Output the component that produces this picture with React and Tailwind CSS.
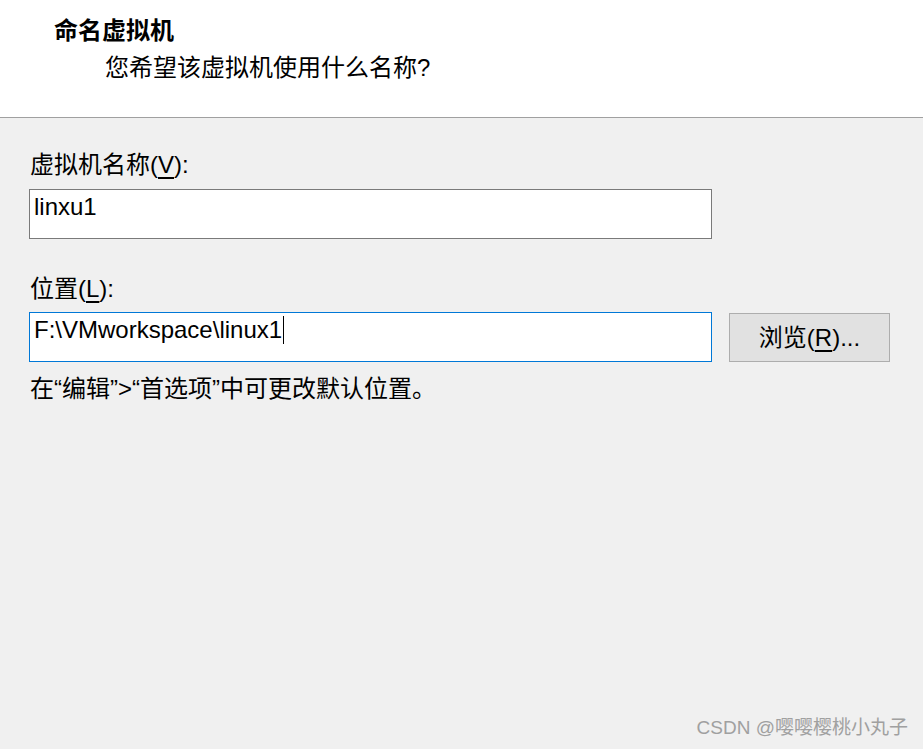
export default function App() {
  const font = "font-['Liberation_Sans','Noto_Sans_CJK_SC',sans-serif]";

  return (
    <div className={`relative w-[923px] h-[749px] bg-[#f0f0f0] text-black overflow-hidden ${font}`}>
      {/* header */}
      <div className="h-[118px] bg-white border-b border-[#a0a0a0] pt-[15px]">
        <div className="pl-[54px] text-[24px] leading-[32px] font-bold">命名虚拟机</div>
        <div className="pl-[105px] mt-[5px] text-[24px] leading-[32px]">您希望该虚拟机使用什么名称?</div>
      </div>

      {/* body */}
      <div className="pl-[29px] pt-[31px] text-[24px]">
        <div className="pl-px leading-[32px]">
          虚拟机名称(<span className="underline underline-offset-4">V</span>):
        </div>
        <div className="mt-[8px] w-[683px] h-[50px] bg-white border border-[#7a7a7a] pl-[4px] leading-[34px]">
          linxu1
        </div>

        <div className="pl-px mt-[34px] leading-[32px]">
          位置(<span className="underline underline-offset-4">L</span>):
        </div>
        <div className="mt-[7px] flex items-start gap-[17px]">
          <div className="w-[683px] h-[50px] bg-white border border-[#0078d7] pl-[4px] leading-[34px] flex items-start">
            <span>F:\VMworkspace\linux1</span>
            <span className="mt-[3px] ml-px w-px h-[28px] bg-black" />
          </div>
          <button className="mt-px w-[161px] h-[49px] bg-[#e1e1e1] border border-[#adadad] text-[24px] leading-[32px]">
            浏览(<span className="underline underline-offset-4">R</span>)...
          </button>
        </div>

        <div className="pl-px mt-[11px] leading-[32px]">在“编辑”&gt;“首选项”中可更改默认位置。</div>
      </div>

      {/* watermark */}
      <div className="absolute right-[15px] bottom-[7px] text-[19px] leading-[28px] text-[#a0a0a0]">
        CSDN @嘤嘤樱桃小丸子
      </div>
    </div>
  );
}
